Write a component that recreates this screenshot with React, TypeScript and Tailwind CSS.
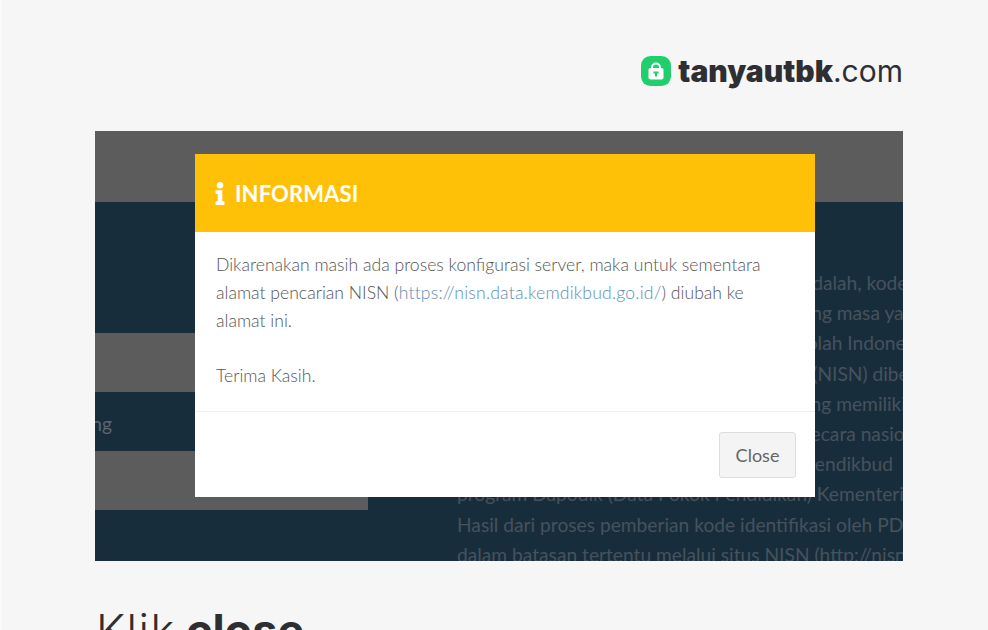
const bodyLines = [
  "NISN, yaitu Nomor Induk Siswa Nasional adalah, kode",
  "pengenal identitas yang berlaku di sepanjang masa yang",
  "satu siswa dengan siswa lain di semua sekolah Indonesia",
  "Nomor Induk Siswa Nasional lain tersebut (NISN) diberikan",
  "diberikan kepada segenap peserta didik yang memiliki",
  "dari data pokok pendidikan yang dikelola secara nasional",
  "telah diterbitkan oleh Pusdatin Setjen Kemendikbud",
  "program Dapodik (Data Pokok Pendidikan) Kementerian",
  "Hasil dari proses pemberian kode identifikasi oleh PDSPK",
  "dalam batasan tertentu melalui situs NISN (http://nisn",
];

function Logo() {
  return (
    <div className="flex items-center justify-end gap-[7px] pr-[85px] h-[30px]">
      <svg width="30" height="30" viewBox="0 0 30 30" aria-hidden>
        <rect width="30" height="30" rx="9.5" fill="#20cf6b" />
        <path d="M11 13V11.5a4 4 0 0 1 8 0V13" fill="none" stroke="#fff" strokeWidth="2" />
        <rect x="7.5" y="12" width="15" height="11.5" rx="2" fill="#fff" />
        <path d="M12.4 15.6h5.2v1.9h-1.6v3h-2v-3h-1.6z" fill="#20cf6b" />
      </svg>
      <div className="font-['Inter',sans-serif] text-[30px] leading-none text-[#2f2f33]">
        <span className="font-black">tanyautbk</span>
        <span className="font-normal">.com</span>
      </div>
    </div>
  );
}

function Modal() {
  return (
    <div className="absolute left-[100px] top-[23px] w-[620px] h-[343px] bg-white font-['Lato',sans-serif] flex flex-col">
      <div className="h-[78px] shrink-0 bg-[#ffc107] flex items-center gap-[10px] pl-[20px] text-white">
        <svg width="10" height="23" viewBox="0 0 10 24" aria-hidden>
          <circle cx="5" cy="3.4" r="3.4" fill="#fff" />
          <path d="M0.4 8.5h7v11.6h2.2V24H0.4v-3.9h2.3v-7.7H0.4z" fill="#fff" />
        </svg>
        <span className="text-[22px] font-bold tracking-[0.1px]">INFORMASI</span>
      </div>
      <div className="h-[180px] shrink-0 border-b border-[#f0f0f0] pt-[19px] px-[21px] text-[17.6px] leading-[28px] text-[#555] font-light">
        <p>
          Dikarenakan masih ada proses konfigurasi server, maka untuk sementara
          <br />
          alamat pencarian NISN (<span className="text-[#5b8db8] tracking-[0.2px]">https://nisn.data.kemdikbud.go.id/</span>) diubah ke
          <br />
          alamat ini.
        </p>
        <p className="mt-[27px]">Terima Kasih.</p>
      </div>
      <div className="flex-1 flex items-start justify-end pt-[20px] pr-[19px]">
        <button className="w-[77px] h-[46px] rounded-[3px] border border-[#ddd] bg-[#f4f4f4] text-[18px] text-[#666] font-normal">
          Close
        </button>
      </div>
    </div>
  );
}

function Screenshot() {
  return (
    <div className="relative ml-[93px] w-[808px] h-[430px] overflow-hidden bg-[#182d3c] font-['Lato',sans-serif]">
      <div className="h-[71px] bg-[#5c5c5c]" />
      <div className="flex h-[359px]">
        <div className="w-[273px] shrink-0">
          <div className="h-[131px]" />
          <div className="h-[59px] bg-[#5c5c5c]" />
          <div className="h-[59px] pt-[6px] flex items-center justify-end w-[17px] text-[19.2px] text-[#5a6670] whitespace-nowrap">
            Tentang
          </div>
          <div className="h-[59px] bg-[#5c5c5c]" />
        </div>
        <div className="pl-[89px] pt-[66px] text-[19.2px] leading-[30.2px] text-[#46525c] whitespace-nowrap">
          {bodyLines.map((line) => (
            <div key={line}>{line}</div>
          ))}
        </div>
      </div>
      <Modal />
    </div>
  );
}

export default function App() {
  return (
    <div className="h-[630px] w-[988px] overflow-hidden border-l-2 border-[#fbfbfb] bg-[#f6f6f6] pt-[56px]">
      <Logo />
      <div className="mt-[45px]">
        <Screenshot />
      </div>
      <div className="ml-[94px] mt-[47px] flex gap-[10px] font-['Inter',sans-serif] text-[45px] leading-none text-[#2f2f33]">
        <span className="font-light tracking-[1.5px]">Klik</span>
        <span className="font-bold">close</span>
      </div>
    </div>
  );
}
